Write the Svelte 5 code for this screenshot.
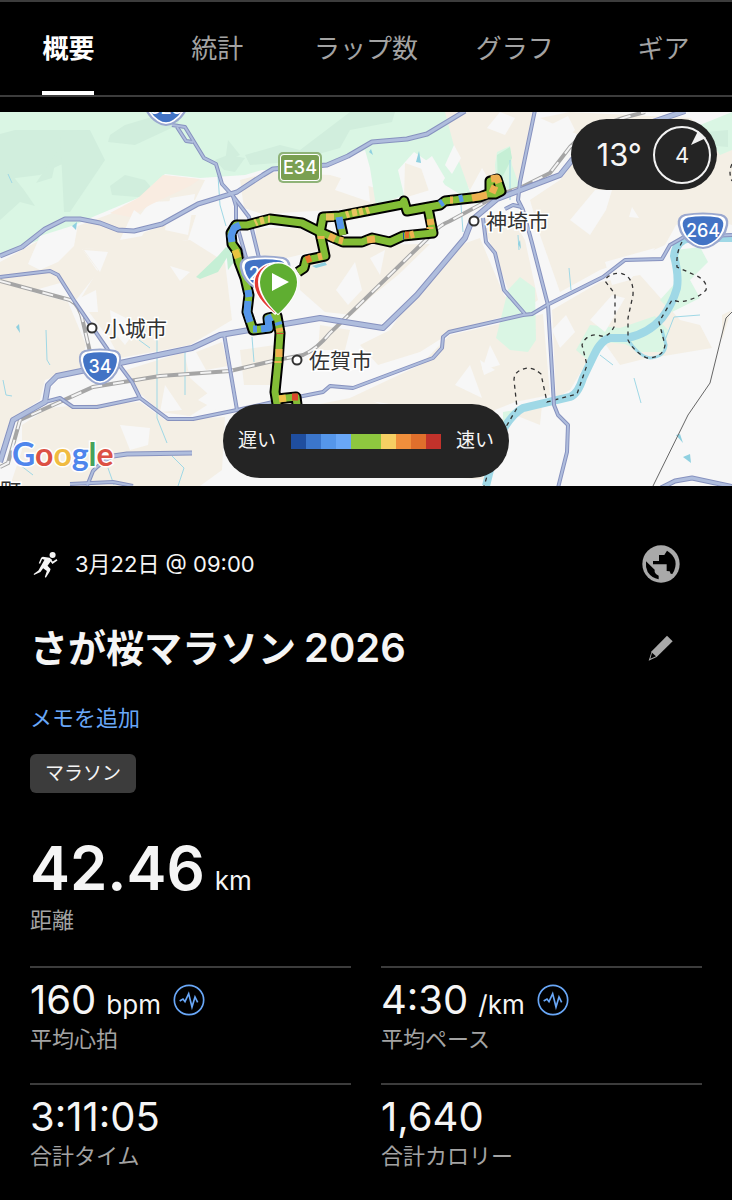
<script>
  let activeTab = '概要';

  const tabs = ['概要', '統計', 'ラップ数', 'グラフ', 'ギア'];

  const legendColors = [
    '#1f4e9f', '#3b76cc', '#5596ea', '#69a7f7', '#8ec73f',
    '#8ec73f', '#f6cf63', '#f08f3c', '#e06f2c', '#c1322b',
  ];

  const stats = [
    { value: '160', unit: 'bpm', label: '平均心拍', chart: true },
    { value: '4:30', unit: '/km', label: '平均ペース', chart: true },
    { value: '3:11:05', label: '合計タイム' },
    { value: '1,640', label: '合計カロリー' },
  ];

  // Land areas
  const farmland = [
    '0,262 40,240 110,214 146,197 163,175 205,180 195,200 150,202 135,222 120,232 135,236 190,215 196,215 188,240 150,246 82,249 98,272 76,300 60,283 0,300',
    '82,249 190,240 225,262 232,320 190,345 120,358 110,340 80,300 98,270',
    '0,283 68,302 86,345 80,368 45,380 40,400 10,420 0,450',
    '22,425 48,408 80,405 140,402 165,420 225,417 222,470 200,486 10,486 22,450',
    '126,370 184,352 190,378 215,400 190,416 160,412 128,382',
    '196,352 222,342 228,366 206,370',
    '240,180 270,172 330,175 400,195 385,207 262,214 244,208',
    '256,228 300,228 318,240 320,250 270,262 256,250',
    '330,245 430,244 398,275 372,296 352,315 325,312 300,290 300,275',
    '440,112 535,112 520,180 495,190 482,168 470,190 455,165',
    '540,118 570,112 690,118 732,150 732,225 700,215 676,225 665,245 640,256 600,270 560,292 540,235 530,200 560,180 590,140',
    '405,163 425,170 430,190 404,198',
    '480,218 510,215 525,240 538,300 525,310 510,295 495,255',
    '410,300 460,245 480,238 490,262 504,295 520,312 455,330 420,352 378,365 360,345 390,330',
    '420,365 450,335 543,314 550,395 515,402 470,420 430,410 350,398',
    '552,310 600,282 640,275 680,320 700,325 712,348 640,360 620,365 606,345 585,365 570,390 556,398',
    '280,412 360,396 420,420 495,405 490,480 350,470',
    '240,350 275,345 272,385 244,385',
    '320,325 350,330 345,350 318,350',
    '722,340 732,308 732,310 722,315',
    '515,415 542,405 540,425',
  ];

  const forest = [
    '0,112 445,112 455,150 470,192 484,208 474,203 445,185 430,163 414,152 398,170 404,195 376,206 370,168 365,150 340,160 290,172 262,170 245,175 200,178 165,174 138,198 95,216 40,240 0,254',
    '497,152 510,146 512,165 520,188 497,190 495,165',
    '700,125 732,112 732,150 720,155',
    '508,290 520,277 535,288 536,340 528,352 510,350 496,338',
    '676,250 700,247 708,262 690,280 700,298 672,312 660,300 678,280',
    '590,325 620,328 655,316 668,330 664,352 640,352 625,344 605,342 590,362 576,350',
    '503,412 515,410 512,420 503,425',
  ];

  const hills = [
    '15,130 90,130 88,158 60,165 40,175 0,180 0,134',
    '60,132 90,130 105,160 70,212 64,212',
    '110,135 125,125 155,116 180,112 178,125 135,145 108,142',
    '110,186 125,175 145,180 155,192 150,198 112,195',
    '0,160 24,190 35,206 20,202 0,220',
    '245,155 280,145 300,150 350,112 395,112 392,122 350,130 340,148 290,162 250,165',
    '228,140 240,155 225,162',
    '215,160 228,155 245,158 235,172 224,170',
    '36,183 58,150 52,178',
    '706,132 728,130 728,147 716,146',
  ];

  const brightForest = [
    '196,277 218,256 226,247 228,256 218,272 200,279',
    '497,155 510,147 512,158 505,172 498,185',
    '226,248 232,243 234,262 228,270',
  ];

  const clearings = [
    '28,264 40,236 78,224 74,246 58,262 40,270',
    '134,210 150,222 142,236 120,240',
    '84,250 108,252 100,272',
    '170,266 190,272 180,281',
    '170,198 195,194 188,235 165,230',
    '76,300 96,290 98,312 84,312',
    '110,310 140,325 125,345 112,330',
    '335,190 352,156 368,182 370,202',
    '445,165 454,145 461,158 452,174',
    '487,128 500,112 515,118 505,135',
    '550,125 568,116 575,130 560,145',
    '570,220 595,190 612,190 606,210 590,235',
    '632,207 639,218 629,217',
    '490,345 500,365 482,370',
    '552,330 566,315 575,332 560,348',
    '590,320 612,295 625,298 605,332',
    '480,360 495,370 484,375',
    '165,385 182,410 160,412',
    '455,385 470,365 482,398',
    '605,262 655,248 640,268 630,280 612,285',
    '420,165 432,156 445,178 432,200',
    '198,400 212,390 220,412',
    '120,425 150,428 148,445 130,450',
    '336,290 355,262 362,290 348,305',
    '370,258 385,250 380,275',
  ];

  const streams = [
    'M8,174 L12,183', 'M218,176 L220,205 L226,226', 'M157,336 V418 L167,443', 'M185,350 V395',
    'M46,330 L47,360 L50,365', 'M3,380 L6,395 L12,396', 'M172,456 L184,468 L178,486', 'M139,340 L150,348',
    'M461,205 L463,232', 'M510,160 V200', 'M518,235 L519,250', 'M569,268 L571,290', 'M600,355 L613,365',
    'M634,378 L641,403', 'M252,337 L254,362', 'M665,340 L674,317 L700,315', 'M108,468 L114,485', 'M20,465 L33,475',
  ];

  const ponds = [
    '72,226 77,222 76,230', '369,152 371,149 373,155', '416,162 419,151 421,163', '312,266 325,262 327,265 316,268',
    '676,435 680,434 683,443', '683,457 690,454 691,463', '16,327 19,324 20,333', '518,244 520,240 521,249',
  ];

  const river =
    'M732,238 H690 Q676,240 674,256 Q679,275 677,288 Q672,305 662,318 Q648,334 627,338 H610 Q601,340 594,355 L583,378 Q578,394 570,397 L523,408 Q512,414 503,430 L490,470 L486,486';

  const railways = [
    'M0,281 L70,300 Q80,305 83,322 L90,352',
    'M0,467 L8,463 L20,420 L93,387 L160,376 L230,371 L277,360 L303,355 Q316,350 330,333 L433,233 Q440,225 450,221 L500,194 L520,188 L550,173 L570,147 Q590,127 630,116 L645,112',
  ];

  const roads = [
    { w: 2, d: 'M177,127 L186,141 L193,142' },
    { w: 2, d: 'M172,125 L185,127 L204,158 L216,164 L222,184 L233,196 L236,206 V222 L249,268' },
    { w: 2, d: 'M233,196 L249,217 L260,262' },
    { w: 2, d: 'M45,402 L60,398 L73,407 H97 L140,398' },
    { w: 2, d: 'M224,334 L237,410' },
    { w: 2, d: 'M505,209 L513,205 L522,207' },
    { w: 2, d: 'M483,218 L486,242 L495,253 L504,290 L525,314' },
    { w: 2, d: 'M113,456 Q98,465 93,471 L87,486 M70,484 L113,482 L133,486' },
    { w: 3, d: 'M113,456 L127,454 L192,453' },
    { w: 2, d: 'M0,277 L50,271 L58,275 L75,302 L108,350 L132,382 L140,398 L168,419 H193 L237,410 L273,402 L323,392 L330,386 L353,388 L433,358 L442,348 L443,337 L449,332 L523,315 L532,314 L547,305 L603,277 L625,260 L662,259 L670,245 L684,237 L732,235' },
    { w: 2, d: 'M535,110 L520,182 L518,200 L523,210 L532,243 L548,305 L554,405 L558,415 L568,425 L567,452 L558,488' },
    { w: 3, d: 'M661,488 L675,481 L692,478 L734,487' },
    { w: 3, d: 'M0,256 L22,247 L45,229 L65,219 H80 L100,223 L118,230 L134,231 L162,224 L198,204 L237,192 L263,175 L273,169 L327,165 L348,156 L372,142 L407,139 L427,134 L465,111' },
    { w: 4, d: 'M0,462 L13,420 L45,402 L48,385 L57,376 L120,363 L192,348 L220,335 L320,318 L383,328 L417,295 L465,238 L472,220 L497,199 L560,175 L572,160 L600,140 L685,111' },
  ];

  const boundaries = [
    'M682,242 Q676,252 677,267 L697,276 Q708,282 706,290 Q698,299 680,302 L672,300 L659,322 L665,345 Q663,358 647,358 Q634,352 628,340 V318 L633,295 Q634,276 620,273 Q607,274 605,281 L615,294 V325 Q608,340 598,335 Q586,334 582,345 L587,365 L577,394 L547,402 L541,374 Q534,368 528,368 Q514,370 514,380 L517,408 L503,432',
    'M732,164 Q728,172 732,181',
    'M489,470 L484,486',
  ];

  // Recorded track
  const track = [
    'M298,272 L304,268 L306,260 L325,256 L320,233 L323,217 L340,216 L402,204 L404,201 L407,211 L440,205 L445,201 L480,197 L490,193 L490,181 L497,179 L501,191 L495,194 L488,194',
    'M428,208 L433,233 L403,236 L390,242 L372,238 L362,242 H343 L320,232 L302,223 L270,219 L247,225 L236,225 L231,233 L232,244 L237,251 L239,262 L245,278 L249,295 L247,312 L253,330 L269,328 L268,318 L277,316 L280,333 L278,362 L275,392 L277,404 L277,399 L296,397 L298,412',
    'M339,217 L343,235',
  ];

  const paceMarks = [
    { c: '#5596ea', d: 'M240,225 L234,228 L231,236 L232,242' },
    { c: '#e8c33f', d: 'M235,250 L238,258' },
    { c: '#5596ea', d: 'M248,290 L249,297 M248,301 L247,312 L250,322 M253,329 L257,329 M261,329 L269,328 L268,319 L272,317' },
    { c: '#e8c35f', d: 'M255,223 L257,222 M260,221 L264,220 M268,219 L270,219' },
    { c: '#eeb050', d: 'M329,236 L335,239 M339,240 L343,241 M367,240 L375,239' },
    { c: '#e06f2c', d: 'M405,235 L409,235' },
    { c: '#eeb050', d: 'M410,235 L414,234 M430,219 L431,225 M430,227 L430,229' },
    { c: '#1f4e9f', d: 'M403,236 L404,236' },
    { c: '#e8c35f', d: 'M326,217 L334,217 M346,215 L349,214 M352,213 L357,212 M359,212 L363,211 M366,211 L369,210' },
    { c: '#5596ea', d: 'M339,217 L341,229 M440,204 L443,202 M459,199 L463,198' },
    { c: '#eeb050', d: 'M450,200 L453,200 M472,198 L487,195 M492,193 L495,186 M491,179 L497,178 L499,183' },
    { c: '#e8742c', d: 'M306,260 L311,258' },
    { c: '#eeb050', d: 'M318,257 L322,256 M321,236 L321,239' },
    { c: '#5596ea', d: 'M278,322 L279,325' },
    { c: '#eeb050', d: 'M279,328 L280,332 M279,349 L279,357 M278,361 L278,363' },
    { c: '#d9472b', d: 'M280,333 L280,334 M292,397 L298,397' },
    { c: '#f0c04c', d: 'M279,399 L286,398' },
  ];

  const shield =
    'M-15,-16 Q0,-19 15,-16 Q21,-14 20,-6 Q18,7 8,14 Q0,20 -8,14 Q-18,7 -20,-6 Q-21,-14 -15,-16Z';

  const shields = [
    { x: 100, y: 367, wide: 1, name: '34' },
    { x: 703, y: 231, wide: 1.2, name: '264' },
    { x: 265, y: 274, wide: 1.2, name: '207' },
    { x: 166, y: 108, wide: 1.1, name: '323' },
  ];

  const cities = [
    { x: 474, y: 221, name: '神埼市' },
    { x: 92, y: 328, name: '小城市' },
    { x: 297, y: 360, name: '佐賀市' },
  ];
</script>

<main>
  <nav>
    {#each tabs as tab}
      <button class="tab" class:active={tab === activeTab} on:click={() => (activeTab = tab)}>
        <span>{tab}</span>
      </button>
    {/each}
  </nav>

  <section class="map">
    <svg class="map-canvas" viewBox="0 112 732 374" role="img" aria-label="地図">
      <rect y="112" width="732" height="374" fill="#f7f7f7" />
      {#each farmland as points}
        <polygon {points} fill="#f4efe5" />
      {/each}
      {#each forest as points}
        <polygon {points} fill="#daf6e4" />
      {/each}
      {#each hills as points}
        <polygon {points} fill="#d1eedd" />
      {/each}
      <polygon points="110,213 138,198 163,175 200,179 190,186 150,205 130,217" fill="#f9ece1" />
      {#each brightForest as points}
        <polygon {points} fill="#c5efd5" />
      {/each}
      {#each clearings as points}
        <polygon {points} fill="#f7f7f7" />
      {/each}

      <g fill="none" stroke="#9fd8e6">
        {#each streams as d}
          <path {d} stroke-width="1" />
        {/each}
        <path d="M627,338 Q638,356 650,358 Q665,357 666,345 L662,330" stroke-width="3" />
        <path d={river} stroke-width="8" />
      </g>
      {#each ponds as points}
        <polygon {points} fill="#8fd0e0" />
      {/each}

      <g fill="none" stroke="#333" stroke-width="1.3" stroke-dasharray="4 4">
        {#each boundaries as d}
          <path {d} />
        {/each}
      </g>
      <path d="M732,312 L726,318 L710,383 L688,415 L653,486" fill="none" stroke="#666" />

      <g fill="none">
        {#each railways as d}
          <path {d} stroke="#a5a5a5" stroke-width="4" />
          <path {d} stroke="#f4f4f4" stroke-width="2" stroke-dasharray="11 11" />
        {/each}
      </g>

      <g fill="none" stroke-linejoin="round">
        {#each roads as road}
          <path d={road.d} stroke="#8792bf" stroke-width={road.w + 2} />
        {/each}
        {#each roads as road}
          <path d={road.d} stroke="#afbddd" stroke-width={road.w} />
        {/each}
      </g>

      <g fill="none" stroke-linejoin="round">
        {#each track as d}
          <path {d} stroke="#000" stroke-width="11" />
        {/each}
        {#each track as d}
          <path {d} stroke="#83bd36" stroke-width="7" />
        {/each}
        {#each paceMarks as mark}
          <path d={mark.d} stroke={mark.c} stroke-width="7" />
        {/each}
      </g>

      <rect x="278" y="152" width="44" height="31" rx="5" fill="#8fb378" />
      <rect x="280" y="154" width="40" height="27" rx="4" fill="#fff" />
      <rect x="281" y="155" width="38" height="25" rx="3" fill="#7a9f51" />
      <text class="road-name" x="300" y="174">E34</text>

      {#each shields as s}
        <g transform="translate({s.x} {s.y})">
          <g transform="scale({s.wide} 1)">
            <path d={shield} fill="#fff" stroke="#9aa8cf" stroke-width="2" />
            <path d={shield} fill="#4273c5" transform="scale(0.84)" />
          </g>
          <text class="road-name" y="6">{s.name}</text>
        </g>
      {/each}

      {#each cities as city}
        <circle cx={city.x} cy={city.y} r="4.5" fill="#fff" stroke="#333" stroke-width="2" />
        <text class="city" x={city.x + 12} y={city.y + 8}>{city.name}</text>
      {/each}
      <text class="city" x="0" y="498">町</text>

      <!-- finish pin, then start pin on top -->
      <path d="M275,314 Q254,298 254,283 A20,20 0 0 1 274,263 L290,283Z" fill="#e23b36" stroke="#fff" stroke-width="1.5" />
      <path d="M278,314 Q259,297 259,282 A19,19 0 0 1 297,282 Q297,297 278,314Z" fill="#fff" stroke="#fff" stroke-width="2" />
      <path d="M278,314 Q260,297 260,282 A18.500,18.500 0 0 1 297,282 Q297,297 278,314Z" fill="#5fae31" />
      <path d="M272,273 L289,282 L272,291Z" fill="#fff" />

      <text class="google" x="12" y="466"
        ><tspan fill="#4f86ec">G</tspan><tspan fill="#dc5145">o</tspan><tspan fill="#f0bb41">o</tspan><tspan
          fill="#4f86ec">g</tspan
        ><tspan fill="#46a35b">l</tspan><tspan fill="#dc5145">e</tspan></text
      >
    </svg>

    <div class="weather">
      <span>13°</span>
      <svg viewBox="0 0 60 60" aria-hidden="true">
        <circle cx="30" cy="30" r="28" fill="none" stroke="#f2f2f2" stroke-width="2" />
        <path d="M39,20 L46,6 L54,13Z" fill="#f2f2f2" />
        <text x="30" y="38">4</text>
      </svg>
    </div>

    <div class="legend">
      <span>遅い</span>
      <div class="scale">
        {#each legendColors as color}
          <i style="background: {color}"></i>
        {/each}
      </div>
      <span>速い</span>
    </div>
  </section>

  <section class="details">
    <div class="row meta">
      <svg class="runner" viewBox="96 62 80 80" aria-hidden="true">
        <circle cx="157" cy="74" r="9" fill="#f5f5f5" />
        <path d="M128,79 L148,82 L155,88 L142,106 L151,115 L149,122 L137,141 L134,139 L140,121 L129,113 L121,124 L102,133 L101,130 L115,120 L123,106 L133,88 L126,86 L120,100 L116,98 L123,82Z" fill="#f5f5f5" />
        <path d="M150,88 L157,97 L170,88" fill="none" stroke="#f5f5f5" stroke-width="5" />
      </svg>
      <time>3月22日 @ 09:00</time>
      <button class="icon-button" aria-label="公開">
        <svg width="38" height="38" viewBox="67 45 114 114">
          <circle cx="124" cy="102" r="56" fill="#a9a9a9" />
          <path d="M100,93 H118 V75 H134 L142,62 Q160,72 167,92 Q171,112 158,132 L153,131 L150,124 L141,123 V103 H100Z" fill="#000" />
          <path d="M79,94 L105,119 V126 Q107,133 117,137 V148 Q96,144 84,126 Q77,110 79,94Z" fill="#000" />
        </svg>
      </button>
    </div>

    <div class="row heading">
      <h1>さが桜マラソン<span>2026</span></h1>
      <button class="icon-button" aria-label="編集">
        <svg width="26" height="26" viewBox="86 312 78 78">
          <path d="M143,314 L160,331 L112,378 L88,389 L97,361Z" fill="#a9a9a9" />
          <path d="M98,365 L110,376 L93,383Z" fill="#000" />
        </svg>
      </button>
    </div>

    <button class="memo">メモを追加</button>
    <span class="tag">マラソン</span>

    <div class="distance">
      <p class="value">42.46<small>km</small></p>
      <p class="label">距離</p>
    </div>

    <div class="stats">
      {#each stats as stat}
        <div class="stat">
          <div class="stat-value">
            <p>{stat.value}{#if stat.unit}<small>{stat.unit}</small>{/if}</p>
            {#if stat.chart}
              <button class="chart-button" aria-label="{stat.label} グラフ">
                <svg width="32" height="32" viewBox="520 460 96 96">
                  <circle cx="568" cy="508" r="44" />
                  <path d="M540,511 L550,505 L556,513 L567,489 L577,529 L586,499 L594,515" />
                </svg>
              </button>
            {/if}
          </div>
          <p class="label">{stat.label}</p>
        </div>
      {/each}
    </div>
  </section>
</main>

<style>
  :global(body) {
    margin: 0;
    background: #000;
  }

  main {
    min-height: 100vh;
    background: #000;
    color: #f5f5f5;
    font-family: Inter, "Noto Sans CJK JP", sans-serif;
    overflow: hidden;
  }

  p,
  h1 {
    margin: 0;
  }

  button {
    padding: 0;
    border: none;
    background: none;
    color: inherit;
    font: inherit;
    cursor: pointer;
  }

  svg {
    display: block;
  }

  /* Tabs */
  nav {
    display: grid;
    grid-template-columns: repeat(5, 1fr);
    height: 93px;
    margin: 0 -6px 15px;
    border-top: 2px solid #3c3c3c;
    border-bottom: 2px solid #3c3c3c;
  }

  .tab {
    display: flex;
    justify-content: center;
    color: #a3a3a3;
    font-size: 26px;
    line-height: 94px;
  }

  .tab span {
    box-sizing: border-box;
    height: 93px;
  }

  .tab.active span {
    border-bottom: 4px solid #fff;
    color: #fff;
    font-weight: 700;
  }

  /* Map */
  .map {
    position: relative;
  }

  .map-canvas {
    width: 100%;
    height: auto;
  }

  .road-name {
    fill: #fff;
    font-size: 18px;
    font-weight: 500;
    text-anchor: middle;
  }

  .city {
    fill: #333;
    font-size: 21px;
    paint-order: stroke;
    stroke: #fff;
    stroke-width: 3px;
  }

  .google {
    font-family: Lato, sans-serif;
    font-size: 32px;
    font-weight: 700;
    paint-order: stroke;
    stroke: #fff;
    stroke-width: 3px;
  }

  .weather {
    position: absolute;
    top: 7px;
    right: 15px;
    display: flex;
    align-items: center;
    gap: 10px;
    height: 71px;
    padding: 0 5px 0 26px;
    border-radius: 36px;
    background: #242424;
    font-size: 31px;
  }

  .weather svg {
    width: 60px;
    height: 60px;
  }

  .weather text {
    fill: #f5f5f5;
    font-size: 22px;
    text-anchor: middle;
  }

  .legend {
    position: absolute;
    bottom: 8px;
    left: 50%;
    display: flex;
    align-items: center;
    justify-content: space-between;
    box-sizing: border-box;
    width: 286px;
    height: 74px;
    padding: 0 15px;
    border-radius: 37px;
    background: #242424;
    font-size: 19px;
    line-height: 28px;
    transform: translateX(-50%);
  }

  .scale {
    display: flex;
    width: 150px;
    height: 15px;
  }

  .scale i {
    flex: 1;
  }

  /* Activity details */
  .details {
    padding: 58px 30px 0;
  }

  .row {
    display: flex;
    align-items: center;
    padding-right: 20px;
  }

  .meta {
    height: 40px;
    margin-bottom: 36px;
    font-size: 22px;
    line-height: 28px;
  }

  .runner {
    width: 27px;
    height: 27px;
    margin: 0 16px 0 2px;
  }

  .icon-button {
    display: flex;
    align-items: center;
    justify-content: center;
    width: 42px;
    height: 42px;
    margin-left: auto;
  }

  .heading {
    height: 56px;
    margin-bottom: 26px;
  }

  h1 {
    font-size: 38px;
    font-weight: 600;
    line-height: 56px;
  }

  h1 span {
    margin-left: 8px;
    font-size: 40px;
  }

  .memo {
    display: block;
    margin-bottom: 20px;
    color: #69a7f7;
    font-size: 22px;
    line-height: 32px;
  }

  .tag {
    display: block;
    width: fit-content;
    padding: 0 15px;
    border-radius: 6px;
    background: #3c3c3c;
    font-size: 19px;
    line-height: 39px;
  }

  .distance {
    margin: 39px 0 30px;
  }

  .value {
    font-size: 60px;
    font-weight: 600;
    line-height: 72px;
  }

  small {
    margin-left: 10px;
    font-size: 26px;
    font-weight: 400;
    line-height: 1;
  }

  .label {
    color: #a3a3a3;
    font-size: 22px;
    line-height: 32px;
  }

  .stats {
    display: grid;
    grid-template-columns: 1fr 1fr;
    column-gap: 30px;
  }

  .stat {
    padding: 9px 0 28px;
    border-top: 2px solid #3c3c3c;
  }

  .stat-value {
    display: flex;
    align-items: center;
    gap: 12px;
    height: 46px;
    font-size: 40px;
    line-height: 46px;
  }

  .chart-button svg {
    fill: none;
    stroke: #69a7f7;
    stroke-width: 5;
  }
</style>
